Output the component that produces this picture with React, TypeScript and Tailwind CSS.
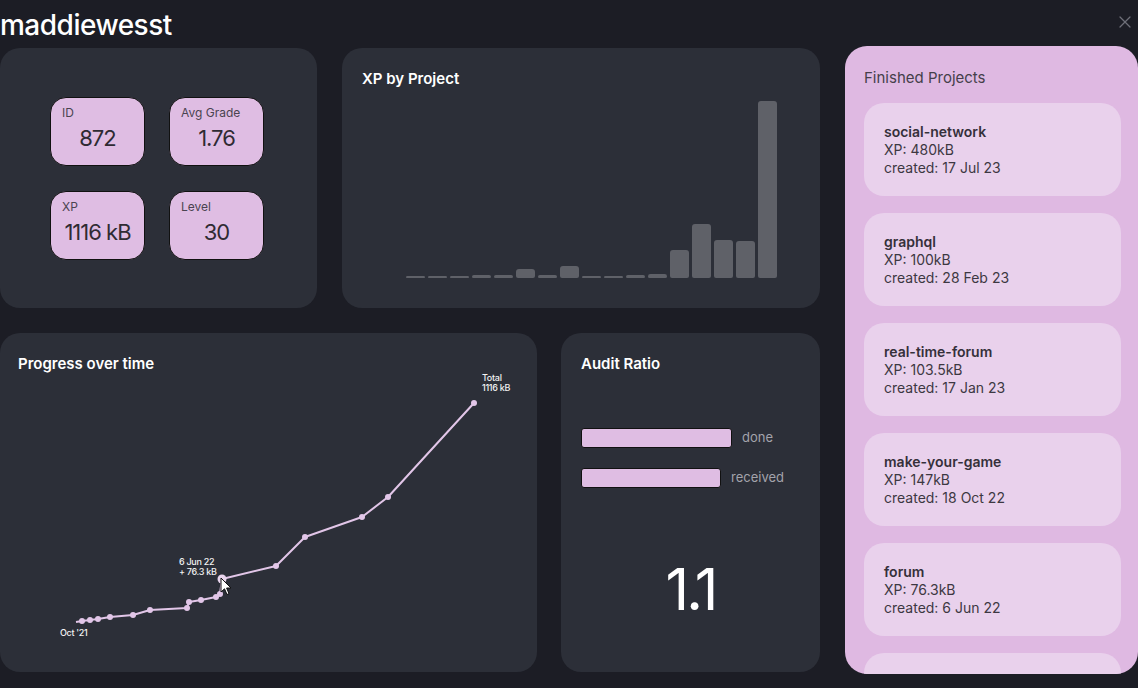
import React from 'react';
import { X } from 'lucide-react';

interface Stat {
  label: string;
  value: string;
}

interface Project {
  name: string;
  xp: string;
  created: string;
}

const stats: Stat[] = [
  { label: 'ID', value: '872' },
  { label: 'Avg Grade', value: '1.76' },
  { label: 'XP', value: '1116 kB' },
  { label: 'Level', value: '30' },
];

// heights in px, read off the bar chart
const xpBars = [2, 2, 2, 3, 3, 9, 3, 12, 2, 2, 3, 4, 28, 54, 38, 37, 177];

const projects: Project[] = [
  { name: 'social-network', xp: '480kB', created: '17 Jul 23' },
  { name: 'graphql', xp: '100kB', created: '28 Feb 23' },
  { name: 'real-time-forum', xp: '103.5kB', created: '17 Jan 23' },
  { name: 'make-your-game', xp: '147kB', created: '18 Oct 22' },
  { name: 'forum', xp: '76.3kB', created: '6 Jun 22' },
];

const progress: Array<[number, number]> = [
  [76, 289], [82, 288], [90, 287], [98, 286], [110, 284], [133, 282], [150, 277],
  [187, 275], [189, 269], [201, 267], [216, 264], [220, 261], [222, 246],
  [276, 233], [305, 204], [362, 184], [388, 164], [474, 70],
];

const StatBox: React.FC<{ stat: Stat }> = ({ stat }) => (
  <div className="w-[95px] h-[69px] rounded-[16px] bg-[#dfbde3] border border-[#111] pl-[11px] pt-[7px] flex flex-col">
    <span className="text-[12px] leading-[16px] text-[#4a4450]">{stat.label}</span>
    <span className="-ml-[11px] mt-[3px] text-[22px] leading-[28px] tracking-[-1px] whitespace-nowrap text-[#2f2b33] text-center">
      {stat.value}
    </span>
  </div>
);

const ProgressChart: React.FC = () => {
  const pts = progress.map(([x, y]) => `${x},${y}`).join(' ');
  return (
    <svg className="absolute inset-0" width="537" height="339" viewBox="0 0 537 339">
      <polyline points={pts} fill="none" stroke="#e2c6e8" strokeWidth="2" strokeLinejoin="round" />
      {progress.slice(1).map(([x, y], i) =>
        x === 222 ? null : <circle key={i} cx={x} cy={y} r="3" fill="#e2c6e8" />
      )}
      <circle cx="222" cy="246" r="4.5" fill="#ead6ee" />
      <g fontSize="9" fill="#f2f2f2" fontWeight="500" letterSpacing="-0.3">
        <text x="179" y="232">6 Jun 22</text>
        <text x="179" y="242">+ 76.3 kB</text>
        <text x="482" y="48">Total</text>
        <text x="482" y="58">1116 kB</text>
        <text x="60" y="303">Oct '21</text>
      </g>
      {/* mouse pointer */}
      <path
        d="M221 245 L221 259 L224.5 255.8 L227 261.5 L229 260.6 L226.6 255 L231 255 Z"
        fill="#ffffff"
        stroke="#111"
        strokeWidth="1"
        strokeLinejoin="round"
      />
    </svg>
  );
};

export default function App() {
  return (
    <div
      className="w-[1138px] h-[688px] overflow-hidden bg-[#1c1d25] text-white"
      style={{ fontFamily: 'Inter, "Noto Sans", sans-serif' }}
    >
      <div className="h-[46px] flex items-start justify-between">
        <h1 className="text-[28px] leading-none font-medium tracking-[-0.5px] pt-[11px] text-white">maddiewesst</h1>
        <X className="mt-[12px] mr-[3px] text-[#6e6f78]" size={20} strokeWidth={1.5} />
      </div>

      <div className="flex gap-[25px]">
        <div className="w-[820px] flex flex-col gap-[25px] pt-[2px]">
          <div className="flex gap-[25px] h-[260px]">
            <div className="w-[317px] rounded-[20px] bg-[#2c2f38] flex items-center justify-center pr-[3px]">
              <div className="grid grid-cols-2 gap-x-[24px] gap-y-[25px]">
                {stats.map((s) => (
                  <StatBox key={s.label} stat={s} />
                ))}
              </div>
            </div>

            <div className="w-[478px] rounded-[20px] bg-[#2c2f38] flex flex-col">
              <h2 className="px-5 pt-[21px] text-[15px] leading-[20px] font-semibold">XP by Project</h2>
              <div className="flex-1 flex items-end gap-[3px] ml-[64px] w-[371px] pb-[30px]">
                {xpBars.map((h, i) => (
                  <div key={i} className="w-[19px] bg-[#5f6168] rounded-t-[3px] rounded-b-[2px]" style={{ height: h }} />
                ))}
              </div>
            </div>
          </div>

          <div className="flex gap-[24px] h-[339px]">
            <div className="relative w-[537px] rounded-[20px] bg-[#2c2f38]">
              <h2 className="pl-[18px] pt-[21px] text-[15px] leading-[20px] font-semibold">Progress over time</h2>
              <ProgressChart />
            </div>

            <div className="w-[259px] rounded-[20px] bg-[#2c2f38] flex flex-col px-5">
              <h2 className="pt-[21px] text-[15px] leading-[20px] font-semibold">Audit Ratio</h2>
              <div className="mt-[54px] flex flex-col gap-[20px]">
                <div className="flex items-center gap-[10px]">
                  <div className="w-[151px] h-[20px] rounded-[3px] bg-[#dfbde3] border border-[#111]" />
                  <span className="text-[13px] text-[#a3a3ab]">done</span>
                </div>
                <div className="flex items-center gap-[10px]">
                  <div className="w-[140px] h-[20px] rounded-[3px] bg-[#dfbde3] border border-[#111]" />
                  <span className="text-[13px] text-[#a3a3ab]">received</span>
                </div>
              </div>
              <div className="mt-[72px] text-center text-[58px] leading-none font-normal tracking-[-3px] text-white">1.1</div>
            </div>
          </div>
        </div>

        <div className="w-[293px] h-[628px] rounded-[22px] bg-[#dfb9e2] overflow-hidden pl-[19px] pr-[17px] flex flex-col">
          <h2 className="pt-[22px] text-[15px] leading-[20px] text-[#45404a]">Finished Projects</h2>
          <div className="mt-[15px] flex flex-col gap-[17px]">
            {projects.map((p) => (
              <div
                key={p.name}
                className="h-[93px] shrink-0 rounded-[20px] bg-[#e9d1ec] pl-[20px] flex flex-col justify-center text-[14px] leading-[18px] text-[#3d3842]"
              >
                <span className="font-semibold text-[#35303a]">{p.name}</span>
                <span>XP: {p.xp}</span>
                <span>created: {p.created}</span>
              </div>
            ))}
            {/* next card peeks in below the fold */}
            <div className="h-[93px] shrink-0 rounded-[20px] bg-[#e9d1ec]" />
          </div>
        </div>
      </div>
    </div>
  );
}
